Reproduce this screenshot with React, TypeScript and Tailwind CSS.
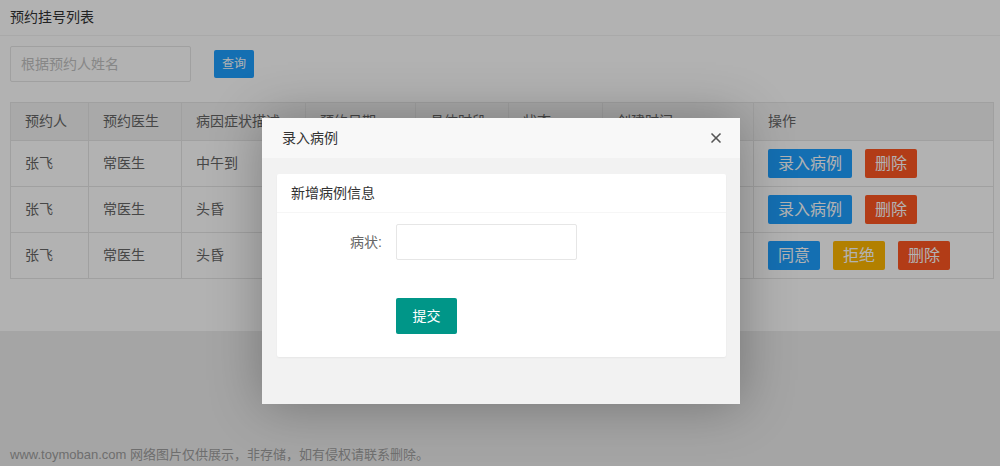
import { X } from "lucide-react";

const cols = [78, 93, 124, 110, 93, 94, 151, 240];
const heads = ["预约人", "预约医生", "病因症状描述", "预约日期", "具体时段", "状态", "创建时间", "操作"];

type Row = { name: string; doctor: string; desc: string; date: string; slot: string; status: string; created: string; ops: string[] };

const rows: Row[] = [
  { name: "张飞", doctor: "常医生", desc: "中午到", date: "2023-05-20", slot: "上午", status: "已同意", created: "2023-05-19 10:20", ops: ["录入病例", "删除"] },
  { name: "张飞", doctor: "常医生", desc: "头昏", date: "2023-05-21", slot: "下午", status: "已同意", created: "2023-05-19 11:02", ops: ["录入病例", "删除"] },
  { name: "张飞", doctor: "常医生", desc: "头昏", date: "2023-05-22", slot: "上午", status: "待审核", created: "2023-05-19 11:15", ops: ["同意", "拒绝", "删除"] },
];

const btnColor: Record<string, string> = {
  录入病例: "bg-[#1E9FFF]",
  同意: "bg-[#1E9FFF]",
  拒绝: "bg-[#FFB800]",
  删除: "bg-[#FF5722]",
};

export default function App() {
  return (
    <div
      className="relative h-[466px] w-full overflow-hidden bg-[#ededed] text-[14px] text-[#666]"
      style={{ fontFamily: '"Liberation Sans", "Noto Sans CJK SC", sans-serif' }}
    >
      <div className="h-[331px] bg-white">
        <div className="flex h-[36px] items-center border-b border-[#f2f2f2] px-[10px] text-[#333]">预约挂号列表</div>
        <div className="px-[10px] pt-[10px]">
          <div className="flex items-center">
            <div className="flex h-[36px] w-[181px] items-center rounded-[2px] border border-[#e6e6e6] px-[10px] text-[#c2c2c2]">
              根据预约人姓名
            </div>
            <button className="ml-[23px] h-[28px] rounded-[2px] bg-[#1E9FFF] px-[8px] text-[12px] text-white">查询</button>
          </div>
          <table className="mt-[20px] w-[983px] table-fixed border-collapse">
            <colgroup>
              {cols.map((w, i) => (
                <col key={i} style={{ width: w }} />
              ))}
            </colgroup>
            <thead>
              <tr className="h-[38px] bg-[#f2f2f2]">
                {heads.map((h) => (
                  <th key={h} className="whitespace-nowrap border border-[#e6e6e6] px-[14px] text-left font-normal text-[#666]">
                    {h}
                  </th>
                ))}
              </tr>
            </thead>
            <tbody>
              {rows.map((r, i) => (
                <tr key={i} className="h-[46px]">
                  {[r.name, r.doctor, r.desc, r.date, r.slot, r.status, r.created].map((c, j) => (
                    <td key={j} className="overflow-hidden whitespace-nowrap border border-[#e6e6e6] px-[14px]">
                      {c}
                    </td>
                  ))}
                  <td className="border border-[#e6e6e6] px-[14px]">
                    <div className="flex gap-[13px]">
                      {r.ops.map((o) => (
                        <button key={o} className={`h-[29px] rounded-[2px] px-[10px] text-[16px] text-white ${btnColor[o]}`}>
                          {o}
                        </button>
                      ))}
                    </div>
                  </td>
                </tr>
              ))}
            </tbody>
          </table>
        </div>
      </div>

      {/* shade */}
      <div className="absolute inset-0 bg-black/30" />

      {/* modal */}
      <div className="absolute left-[262px] top-[118px] flex h-[286px] w-[478px] flex-col bg-[#f2f2f2] shadow-[1px_1px_50px_rgba(0,0,0,0.3)]">
        <div className="flex h-[40px] items-center justify-between bg-[#f8f8f8] pl-[20px] pr-[16px] text-[#333]">
          <span>录入病例</span>
          <X size={16} strokeWidth={2.5} className="text-[#555]" />
        </div>
        <div className="px-[15px] pt-[16px]">
          <div className="h-[183px] w-[449px] rounded-[2px] bg-white shadow-[0_1px_2px_rgba(0,0,0,0.05)]">
            <div className="flex h-[39px] items-center border-b border-[#f6f6f6] px-[14px] text-[#333]">新增病例信息</div>
            <div className="mt-[11px] flex items-center">
              <div className="w-[105px] text-right text-[#666]">病状:</div>
              <div className="ml-[14px] h-[36px] w-[181px] rounded-[2px] border border-[#e6e6e6]" />
            </div>
            <button className="ml-[119px] mt-[38px] h-[36px] w-[61px] rounded-[2px] bg-[#009688] text-white">提交</button>
          </div>
        </div>
      </div>

      <div className="absolute bottom-[2px] left-[10px] text-[13px] text-[#6e6e6e]">
        www.toymoban.com 网络图片仅供展示，非存储，如有侵权请联系删除。
      </div>
    </div>
  );
}
